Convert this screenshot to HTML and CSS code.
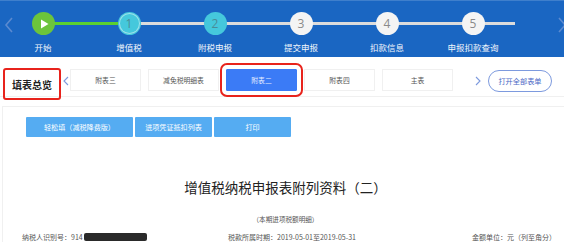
FILE: index.html
```html
<!DOCTYPE html>
<html lang="zh-CN">
<head>
<meta charset="utf-8">
<title>增值税申报</title>
<link rel="stylesheet" href="styles.css">
</head>
<body>
<header class="steps-bar">
  <span class="nav-arrow nav-left"><svg width="10" height="16" viewBox="0 0 10 16"><path d="M8 1 L2 8 L8 15" fill="none" stroke="#5b8ad0" stroke-width="1.6"/></svg></span>
  <ol class="steps">
    <li class="step step-done">
      <span class="circle circle-start"><svg width="9" height="10" viewBox="0 0 9 10"><path d="M1 0.5 L8.5 5 L1 9.5 Z" fill="#fff"/></svg></span>
      <span class="label">开始</span>
    </li>
    <li class="step">
      <span class="circle circle-current">1</span>
      <span class="label">增值税</span>
    </li>
    <li class="step">
      <span class="circle circle-active">2</span>
      <span class="label">附税申报</span>
    </li>
    <li class="step">
      <span class="circle">3</span>
      <span class="label">提交申报</span>
    </li>
    <li class="step">
      <span class="circle">4</span>
      <span class="label">扣款信息</span>
    </li>
    <li class="step step-last">
      <span class="circle">5</span>
      <span class="label">申报扣款查询</span>
    </li>
  </ol>
  <span class="nav-arrow nav-right"><svg width="10" height="16" viewBox="0 0 10 16"><path d="M2 1 L8 8 L2 15" fill="none" stroke="#5b8ad0" stroke-width="1.6"/></svg></span>
</header>

<nav class="tabbar">
  <div class="overview">填表总览</div>
  <span class="tab-arrow"><svg width="6" height="10" viewBox="0 0 6 10"><path d="M5 1 L1 5 L5 9" fill="none" stroke="#7d9ade" stroke-width="1.1"/></svg></span>
  <div class="tabs">
    <span class="tab">附表三</span>
    <span class="tab">减免税明细表</span>
    <span class="tab tab-active">附表二</span>
    <span class="tab">附表四</span>
    <span class="tab">主表</span>
  </div>
  <span class="tab-arrow tab-arrow-right"><svg width="6" height="10" viewBox="0 0 6 10"><path d="M1 1 L5 5 L1 9" fill="none" stroke="#7d9ade" stroke-width="1.1"/></svg></span>
  <button class="open-all">打开全部表单</button>
</nav>

<main class="panel">
  <div class="actions">
    <button class="btn btn-wide">轻松填（减税降费版）</button>
    <button class="btn">进项凭证抵扣列表</button>
    <button class="btn">打印</button>
  </div>
  <h1 class="title">增值税纳税申报表附列资料（二）</h1>
  <p class="subtitle">（本期进项税额明细）</p>
  <div class="info">
    <span class="info-left">纳税人识别号：914<span class="redact"></span></span>
    <span class="info-mid">税款所属时期：2019-05-01至2019-05-31</span>
    <span class="info-right">金额单位：元（列至角分）</span>
  </div>
</main>
</body>
</html>
```
FILE: styles.css
```css
* { box-sizing: border-box; }
html, body { margin: 0; padding: 0; background: #fff; }
body {
  font-family: "Noto Sans CJK SC", "Noto Sans", sans-serif;
  color: #333;
  overflow: hidden;
  width: 564px;
  height: 251px;
}

/* ---------- steps header ---------- */
.steps-bar {
  position: relative;
  height: 57px;
  background: #1a66c2;
  border-top: 1px solid #3f7fcc;
}
.nav-arrow { position: absolute; top: 16px; line-height: 0; }
.nav-left { left: 4px; }
.nav-right { left: 557px; }
.steps {
  list-style: none;
  margin: 0;
  padding: 0;
  display: flex;
}
.step {
  position: relative;
  width: 86px;
  display: flex;
  flex-direction: column;
  align-items: center;
  padding-top: 11px;
}
.step::after {
  content: "";
  position: absolute;
  top: 21px;
  left: 43px;
  width: 86px;
  height: 3px;
  background: #dcdcdc;
  z-index: 0;
}
.step-done::after { background: #5bd12f; }
.step-last::after { width: 42px; }
.circle {
  position: relative;
  z-index: 1;
  width: 23px;
  height: 23px;
  border-radius: 50%;
  background: #f4f4f4;
  color: #8a8a8a;
  font-family: "Open Sans", sans-serif;
  font-size: 12px;
  line-height: 23px;
  text-align: center;
  display: flex;
  align-items: center;
  justify-content: center;
}
.circle-start { background: #6cc43c; padding-left: 2px; }
.circle-active { background: #45c8dc; color: #4a8c98; }
.circle-current {
  width: 19px;
  height: 19px;
  margin: 2px 0;
  background: #45c8dc;
  color: #4a8c98;
  box-shadow: 0 0 0 1px #9fe0ea, 0 0 0 2px #45c8dc;
}
.label {
  margin-top: 6px;
  font-size: 8.5px;
  line-height: 12px;
  color: #f2f6fc;
  white-space: nowrap;
}

/* ---------- tab bar ---------- */
.tabbar {
  display: flex;
  align-items: flex-start;
  height: 40px;
  border-bottom: 1px solid #f0f0f0;
}
.overview {
  margin: 11px 0 0 3px;
  width: 58px;
  height: 32px;
  border: 2px solid #e8231c;
  border-radius: 3px;
  font-size: 10px;
  font-weight: 700;
  color: #222;
  display: flex;
  align-items: center;
  justify-content: center;
  padding-top: 1px;
}
.tab-arrow { margin: 19px 0 0 0; width: 9px; text-align: center; line-height: 0; }
.tab-arrow-right { margin-left: 20px; }
.tabs {
  display: flex;
  gap: 7px;
  margin: 12px 0 0 0;
}
.tab {
  width: 71px;
  height: 22px;
  border: 1px solid #f0f0f0;
  font-size: 6.8px;
  color: #555;
  display: flex;
  align-items: center;
  justify-content: center;
}
.tab-active {
  background: #3b7bf6;
  border-color: #3b7bf6;
  color: #e6eeff;
  outline: 2px solid #e8231c;
  outline-offset: 4px;
  border-radius: 1px;
}
.open-all {
  margin: 13px 0 0 6px;
  width: 64px;
  height: 22px;
  border: 1px solid #7d9ade;
  border-radius: 11px;
  background: #fff;
  color: #4a68c6;
  font-family: inherit;
  font-size: 7.2px;
  padding: 0;
}

/* ---------- content panel ---------- */
.panel {
  margin: 9px 0 0 2px;
  border-top: 1px solid #f0f0f0;
  border-left: 1px solid #f0f0f0;
  padding: 10px 8px 0 0;
}
.actions {
  display: flex;
  gap: 2px;
  padding-left: 23px;
}
.btn {
  width: 77px;
  height: 20px;
  border: 0;
  border-radius: 1px;
  background: #55acf2;
  color: #fff;
  font-family: inherit;
  font-size: 7.1px;
  padding: 0;
}
.btn-wide { width: 107px; }
.title {
  margin: 41px 0 0 12px;
  text-align: center;
  font-size: 13.5px;
  font-weight: 400;
  line-height: 18px;
  color: #222;
}
.subtitle {
  margin: 19px 0 0 12px;
  text-align: center;
  font-size: 6.6px;
  line-height: 9px;
  color: #555;
}
.info {
  margin-top: 8px;
  padding-left: 19px;
  display: grid;
  grid-template-columns: 1fr auto 1fr;
  font-size: 7px;
  line-height: 10px;
  color: #555;
}
.info-left { display: flex; align-items: center; }
.info-mid { padding-left: 6px; }
.info-right { text-align: right; }
.redact {
  display: inline-block;
  width: 63px;
  height: 8px;
  margin-left: 1px;
  background: #2a2a2a;
  border-radius: 2px;
}
```
